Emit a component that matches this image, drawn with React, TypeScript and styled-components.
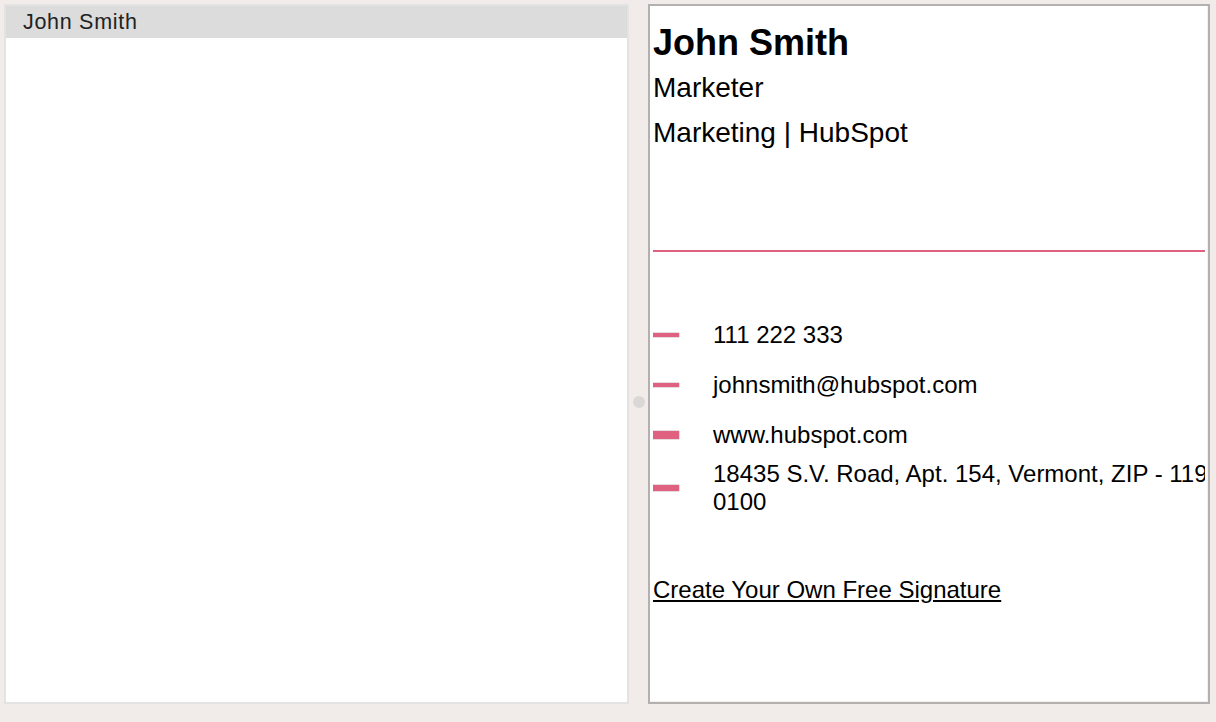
import React from "react";
import styled, { createGlobalStyle } from "styled-components";

const colors = {
  page: "#f1ecea",
  leftBorder: "#e4e2e2",
  header: "#dcdcdc",
  rightBorder: "#b4b0af",
  handle: "#dbd7d6",
  pink: "#e0607f",
  text: "#000000",
};

const GlobalStyle = createGlobalStyle`
  html, body {
    margin: 0;
    padding: 0;
    background: ${colors.page};
  }
  * {
    box-sizing: border-box;
  }
`;

const contacts = [
  { text: "111 222 333", bar: 4 },
  { text: "johnsmith@hubspot.com", bar: 4 },
  { text: "www.hubspot.com", bar: 8 },
  { text: "18435 S.V. Road, Apt. 154, Vermont, ZIP - 119 0100", bar: 6 },
];

const App: React.FC = () => {
  return (
    <>
      <GlobalStyle />
      <Layout>
        <ListPanel>
          <ListItem>John Smith</ListItem>
        </ListPanel>
        <Splitter>
          <Handle />
        </Splitter>
        <PreviewPanel>
          <Signature>
            <Name>John Smith</Name>
            <SubLine>Marketer</SubLine>
            <SubLine>Marketing | HubSpot</SubLine>
            <Rule />
            <ContactList>
              {contacts.map((c) => (
                <ContactRow key={c.text}>
                  <IconCell>
                    <Bar $height={c.bar} />
                  </IconCell>
                  <ContactText>{c.text}</ContactText>
                </ContactRow>
              ))}
            </ContactList>
            <CreateLink href="#">Create Your Own Free Signature</CreateLink>
          </Signature>
        </PreviewPanel>
      </Layout>
    </>
  );
};

const Layout = styled.div`
  display: flex;
  height: 722px;
  padding: 4px 6px 18px 4px;
`;

const ListPanel = styled.div`
  width: 625px;
  height: 700px;
  background: #ffffff;
  border: 2px solid ${colors.leftBorder};
`;

const ListItem = styled.div`
  height: 32px;
  background: ${colors.header};
  padding-left: 17px;
  font-family: "Helvetica Neue", "Liberation Sans", Arial, sans-serif;
  font-size: 21.5px;
  letter-spacing: 0.7px;
  line-height: 32px;
  color: #222222;
`;

const Splitter = styled.div`
  width: 19px;
  display: flex;
  justify-content: center;
  align-items: flex-start;
  padding-top: 392px;
`;

const Handle = styled.div`
  width: 12px;
  height: 12px;
  border-radius: 50%;
  background: ${colors.handle};
`;

const PreviewPanel = styled.div`
  width: 562px;
  height: 700px;
  background: #ffffff;
  border: 2px solid ${colors.rightBorder};
  box-shadow: inset -1px -1px 0 #f3f0ef;
  padding: 14.5px 3px 0 3px;
  overflow: hidden;
`;

const Signature = styled.div`
  font-family: "Liberation Sans", Arial, sans-serif;
  color: ${colors.text};
  overflow: hidden;
`;

const Name = styled.div`
  font-size: 36px;
  font-weight: bold;
  line-height: 44px;
`;

const SubLine = styled.div`
  font-size: 28px;
  line-height: 45px;
`;

const Rule = styled.div`
  height: 2px;
  background: ${colors.pink};
  margin-top: 95.5px;
`;

const ContactList = styled.div`
  margin-top: 58px;
  display: flex;
  flex-direction: column;
`;

const ContactRow = styled.div`
  display: flex;
  align-items: center;
  min-height: 50px;
`;

const IconCell = styled.div`
  width: 60px;
  flex: none;
  display: flex;
  align-items: center;
`;

const Bar = styled.span<{ $height: number }>`
  display: block;
  width: 26px;
  height: ${(p) => p.$height}px;
  background: ${colors.pink};
  box-shadow: 0 0 0 0.5px rgba(190, 170, 175, 0.8);
`;

const ContactText = styled.div`
  width: 540px;
  flex: none;
  font-size: 24px;
  line-height: 27.5px;
`;

const CreateLink = styled.a`
  display: block;
  margin-top: 61px;
  font-size: 24px;
  line-height: 27px;
  color: ${colors.text};
  text-decoration: underline;
`;

export default App;
